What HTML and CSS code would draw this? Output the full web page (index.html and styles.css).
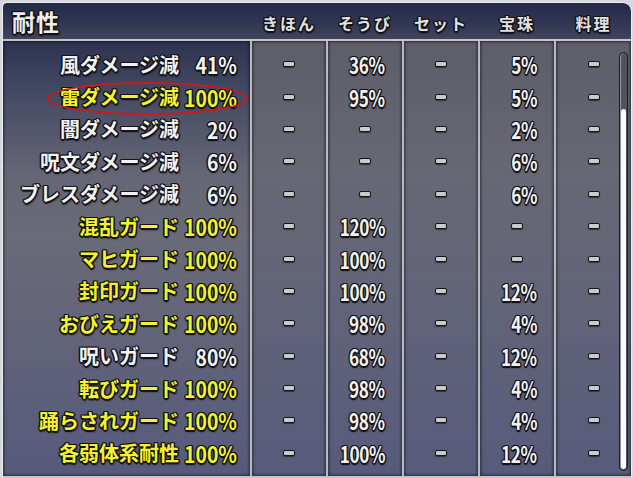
FILE: index.html
```html
<!DOCTYPE html>
<html lang="ja">
<head>
    <meta charset="UTF-8">
    <title>耐性</title>
    <link rel="stylesheet" href="styles.css">
</head>
<body>

<div class="window">
    <div class="head">
        <div class="title">耐性</div>
        <div class="col-head">きほん</div>
        <div class="col-head">そうび</div>
        <div class="col-head">セット</div>
        <div class="col-head">宝珠</div>
        <div class="col-head">料理</div>
    </div>

    <div class="grid">
        <!-- resistance names -->
        <div class="panel names">
            <div class="row"><span class="label">風ダメージ減</span><span class="pct">41%</span></div>
            <div class="row max"><span class="label">雷ダメージ減</span><span class="pct">100%</span></div>
            <div class="row"><span class="label">闇ダメージ減</span><span class="pct">2%</span></div>
            <div class="row"><span class="label">呪文ダメージ減</span><span class="pct">6%</span></div>
            <div class="row"><span class="label">ブレスダメージ減</span><span class="pct">6%</span></div>
            <div class="row max"><span class="label">混乱ガード</span><span class="pct">100%</span></div>
            <div class="row max"><span class="label">マヒガード</span><span class="pct">100%</span></div>
            <div class="row max"><span class="label">封印ガード</span><span class="pct">100%</span></div>
            <div class="row max"><span class="label">おびえガード</span><span class="pct">100%</span></div>
            <div class="row"><span class="label">呪いガード</span><span class="pct">80%</span></div>
            <div class="row max"><span class="label">転びガード</span><span class="pct">100%</span></div>
            <div class="row max"><span class="label">踊らされガード</span><span class="pct">100%</span></div>
            <div class="row max"><span class="label">各弱体系耐性</span><span class="pct">100%</span></div>
            <div class="ring"></div>
        </div>

        <!-- きほん -->
        <div class="panel col">
            <div class="row"><span class="dash"></span></div>
            <div class="row"><span class="dash"></span></div>
            <div class="row"><span class="dash"></span></div>
            <div class="row"><span class="dash"></span></div>
            <div class="row"><span class="dash"></span></div>
            <div class="row"><span class="dash"></span></div>
            <div class="row"><span class="dash"></span></div>
            <div class="row"><span class="dash"></span></div>
            <div class="row"><span class="dash"></span></div>
            <div class="row"><span class="dash"></span></div>
            <div class="row"><span class="dash"></span></div>
            <div class="row"><span class="dash"></span></div>
            <div class="row"><span class="dash"></span></div>
        </div>

        <!-- そうび -->
        <div class="panel col nums">
            <div class="row"><span class="num">36%</span></div>
            <div class="row"><span class="num">95%</span></div>
            <div class="row center"><span class="dash"></span></div>
            <div class="row center"><span class="dash"></span></div>
            <div class="row center"><span class="dash"></span></div>
            <div class="row"><span class="num">120%</span></div>
            <div class="row"><span class="num">100%</span></div>
            <div class="row"><span class="num">100%</span></div>
            <div class="row"><span class="num">98%</span></div>
            <div class="row"><span class="num">68%</span></div>
            <div class="row"><span class="num">98%</span></div>
            <div class="row"><span class="num">98%</span></div>
            <div class="row"><span class="num">100%</span></div>
        </div>

        <!-- セット -->
        <div class="panel col">
            <div class="row"><span class="dash"></span></div>
            <div class="row"><span class="dash"></span></div>
            <div class="row"><span class="dash"></span></div>
            <div class="row"><span class="dash"></span></div>
            <div class="row"><span class="dash"></span></div>
            <div class="row"><span class="dash"></span></div>
            <div class="row"><span class="dash"></span></div>
            <div class="row"><span class="dash"></span></div>
            <div class="row"><span class="dash"></span></div>
            <div class="row"><span class="dash"></span></div>
            <div class="row"><span class="dash"></span></div>
            <div class="row"><span class="dash"></span></div>
            <div class="row"><span class="dash"></span></div>
        </div>

        <!-- 宝珠 -->
        <div class="panel col nums">
            <div class="row"><span class="num">5%</span></div>
            <div class="row"><span class="num">5%</span></div>
            <div class="row"><span class="num">2%</span></div>
            <div class="row"><span class="num">6%</span></div>
            <div class="row"><span class="num">6%</span></div>
            <div class="row center"><span class="dash"></span></div>
            <div class="row center"><span class="dash"></span></div>
            <div class="row"><span class="num">12%</span></div>
            <div class="row"><span class="num">4%</span></div>
            <div class="row"><span class="num">12%</span></div>
            <div class="row"><span class="num">4%</span></div>
            <div class="row"><span class="num">4%</span></div>
            <div class="row"><span class="num">12%</span></div>
        </div>

        <!-- 料理 -->
        <div class="panel col">
            <div class="row"><span class="dash"></span></div>
            <div class="row"><span class="dash"></span></div>
            <div class="row"><span class="dash"></span></div>
            <div class="row"><span class="dash"></span></div>
            <div class="row"><span class="dash"></span></div>
            <div class="row"><span class="dash"></span></div>
            <div class="row"><span class="dash"></span></div>
            <div class="row"><span class="dash"></span></div>
            <div class="row"><span class="dash"></span></div>
            <div class="row"><span class="dash"></span></div>
            <div class="row"><span class="dash"></span></div>
            <div class="row"><span class="dash"></span></div>
            <div class="row"><span class="dash"></span></div>
            <div class="scrollbar"><div class="thumb"></div></div>
        </div>
    </div>
</div>

</body>
</html>
```

FILE: styles.css
```css
/* Page and outer window frame */
body {
    margin: 0;
    padding: 2px 2px 0 2px;
    background-color: #d6d7de;
    font-family: "Noto Sans CJK JP", "Noto Sans", sans-serif;
    font-weight: 700;
    height: 476px;
    overflow: hidden;
}

.window {
    border: 1px solid #eceef2;
    border-bottom: none;
    border-radius: 5px 9px 0 0;
    background-color: #c4c5cc;
    height: 476px;
    overflow: hidden;
}

/* Outlined game text */
.title,
.col-head,
.row {
    text-shadow:
        -1px -1px 0 #121218, 1px -1px 0 #121218,
        -1px 1px 0 #121218, 1px 1px 0 #121218,
        0 -1.5px 0 #121218, 0 1.5px 0 #121218,
        -1.5px 0 0 #121218, 1.5px 0 0 #121218,
        1px 2px 2px rgba(0, 0, 0, 0.6);
}

/* Header bar */
.head {
    display: grid;
    grid-template-columns: 247px repeat(4, 74px) 1fr;
    column-gap: 2px;
    height: 36px;
    background: linear-gradient(to bottom, #252a47 0%, #2f3552 50%, #40455c 100%);
    border-bottom: 2px solid #c3c4cc;
    border-radius: 4px 8px 0 0;
    color: #eeeeee;
}

.title {
    font-size: 23px;
    line-height: 36px;
    padding-left: 9px;
    letter-spacing: 1px;
}

.col-head {
    font-size: 16px;
    line-height: 40px;
    text-align: center;
    letter-spacing: 2px;
    color: #e2e2e2;
}

/* Body columns */
.grid {
    display: grid;
    grid-template-columns: 247px repeat(4, 74px) 1fr;
    column-gap: 2px;
    height: 435px;
    background-color: #b9bac2;
}

.panel {
    position: relative;
    padding-top: 7px;
    box-shadow: inset 0 0 3px 1px rgba(0, 0, 0, 0.55);
    background: linear-gradient(to bottom, #5d5e6a 0%, #676874 30%, #626479 60%, #575b7b 100%);
}

.panel.names {
    background: linear-gradient(to bottom, #2d3350 0%, #454a64 12%, #646675 30%, #6a6b78 45%, #616379 70%, #565a7b 100%);
    padding-right: 13px;
}

.row {
    height: 32.4px;
    display: flex;
    align-items: center;
    justify-content: center;
    color: #f2f2f2;
    font-size: 19px;
}

.names .row {
    justify-content: flex-end;
    font-size: 20px;
}

.names .row.max {
    color: #f4f22e;
}

.label {
    padding-right: 2px;
}

.pct {
    display: inline-block;
    width: 64px;
    margin-left: -8px;
    text-align: right;
    font-size: 22px;
    transform: scaleX(0.88);
    transform-origin: right center;
}

.nums .row {
    justify-content: flex-end;
    padding-right: 17px;
}

.nums .row.center {
    justify-content: center;
    padding-right: 0;
}

/* Tall, narrow game digits */
.num {
    display: inline-block;
    font-size: 22px;
    letter-spacing: -0.5px;
    transform: scaleX(0.78);
    transform-origin: right center;
}

/* The small "none" bar */
.dash {
    display: inline-block;
    width: 10px;
    height: 4px;
    background-color: #cbcbcb;
    border: 1px solid #151518;
    border-radius: 2px;
    box-shadow: 0 1px 1px rgba(0, 0, 0, 0.5);
}

/* Red marker ring around the highlighted row */
.ring {
    position: absolute;
    left: 44px;
    top: 41px;
    width: 197px;
    height: 29px;
    border: 2px solid #d01818;
    border-radius: 50%;
}

/* Scrollbar on the right edge */
.scrollbar {
    position: absolute;
    right: 3px;
    top: 11px;
    width: 7px;
    height: 417px;
    background-color: #50525e;
    border: 1px solid #1c1c22;
    border-radius: 5px;
    box-shadow: inset 1px 0 1px #9a9ba4;
}

.thumb {
    position: absolute;
    left: 1px;
    right: 1px;
    top: 56px;
    bottom: 1px;
    background-color: #fafafa;
    border-radius: 3px;
}
```
